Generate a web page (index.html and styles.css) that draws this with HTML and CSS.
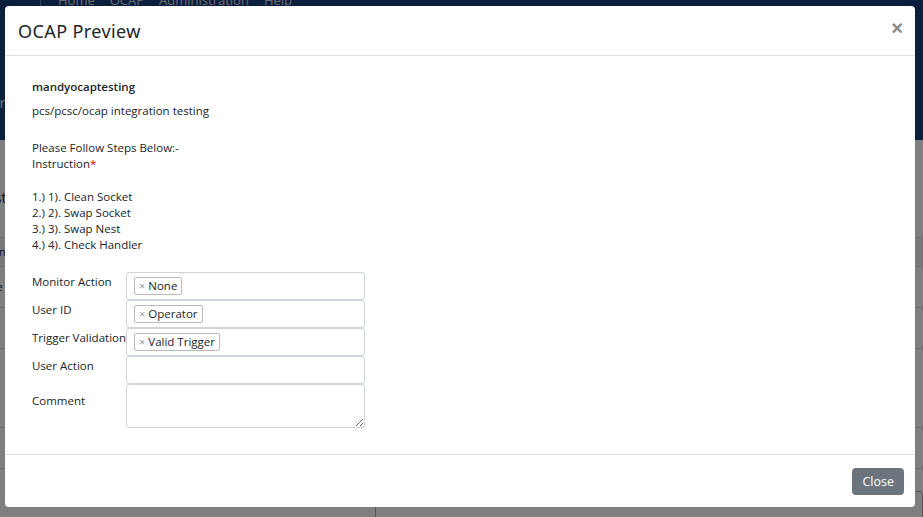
FILE: index.html
```html
<!DOCTYPE html>
<html lang="en">
<head>
    <meta charset="UTF-8">
    <meta name="viewport" content="width=device-width, initial-scale=1.0">
    <title>OCAP Preview</title>
    <link rel="stylesheet" href="styles.css">
</head>
<body>
    <div class="page">
        <header class="top-bar">
            <nav class="main-nav">
                <span class="nav-sep"></span>
                <a href="#">Home</a>
                <a href="#">OCAP</a>
                <a href="#">Administration</a>
                <a href="#">Help</a>
            </nav>
            <h2 class="page-title">Overview</h2>
        </header>
        <div class="page-content">
            <div class="toolbar">
                <span class="toolbar-label">List</span>
                <button class="btn-primary">Save</button>
            </div>
            <div class="table-head">Action</div>
            <div class="table-row">Title</div>
            <div class="table-row"></div>
            <div class="table-row tall"></div>
            <div class="table-row"></div>
            <div class="bottom-field"></div>
        </div>
    </div>

    <div class="backdrop"></div>

    <div class="modal">
        <div class="modal-header">
            <h5 class="modal-title">OCAP Preview</h5>
            <button class="modal-close">&times;</button>
        </div>
        <div class="modal-body">
            <p class="ocap-name">mandyocaptesting</p>
            <p class="ocap-desc">pcs/pcsc/ocap integration testing</p>

            <div class="instructions">
                <div>Please Follow Steps Below:-</div>
                <div>Instruction<span class="required">*</span></div>
                <div class="spacer"></div>
                <div>1.) 1). Clean Socket</div>
                <div>2.) 2). Swap Socket</div>
                <div>3.) 3). Swap Nest</div>
                <div>4.) 4). Check Handler</div>
            </div>

            <div class="preview-form">
                <label>Monitor Action</label>
                <div class="select-box"><span class="tag"><span class="tag-x">&times;</span>None</span></div>

                <label>User ID</label>
                <div class="select-box"><span class="tag"><span class="tag-x">&times;</span>Operator</span></div>

                <label>Trigger Validation</label>
                <div class="select-box"><span class="tag"><span class="tag-x">&times;</span>Valid Trigger</span></div>

                <label>User Action</label>
                <div class="select-box"></div>

                <label class="label-comment">Comment</label>
                <textarea class="comment-box"></textarea>
            </div>
        </div>
        <div class="modal-footer">
            <button class="btn-secondary">Close</button>
        </div>
    </div>
</body>
</html>
```

FILE: styles.css
```css
body {
    margin: 0;
    font-family: "Open Sans", "Noto Sans", Arial, sans-serif;
    font-size: 11.5px;
    color: #212529;
    background: #fff;
    overflow: hidden;
}

/* page behind the modal */
.top-bar {
    background: #163c78;
    height: 140px;
    overflow: hidden;
}
.main-nav {
    display: flex;
    align-items: center;
    gap: 15px;
    margin-top: -8px;
    padding-left: 40px;
    height: 16px;
}
.main-nav a {
    color: #d8dde6;
    text-decoration: none;
    font-size: 13px;
}
.nav-sep {
    width: 1px;
    height: 30px;
    background: #6b7fa3;
    margin-right: 2px;
}
.page-title {
    margin: 84px 0 0 -28px;
    font-size: 15px;
    font-weight: normal;
    color: #e8ebf0;
}
.toolbar {
    display: flex;
    justify-content: space-between;
    align-items: center;
    padding: 12px 0 0 0;
}
.toolbar-label {
    margin-left: -16px;
    margin-top: 36px;
    font-size: 14px;
}
.btn-primary {
    background: #007bff;
    color: #fff;
    border: none;
    font-size: 13px;
    height: 23px;
    padding: 0 4px 0 4px;
    margin-right: -40px;
    align-self: flex-start;
}
.table-head {
    margin-top: 30px;
    height: 28px;
    background: #f2f2f2;
    border-top: 1px solid #ddd;
    border-bottom: 1px solid #ddd;
    text-indent: -28px;
    line-height: 28px;
}
.table-row {
    height: 40px;
    border-bottom: 1px solid #ddd;
    text-indent: -20px;
    line-height: 40px;
}
.table-row.tall {
    height: 78px;
}
.bottom-field {
    margin: 22px 0 0 375px;
    height: 30px;
    border: 1px solid #aaa;
    border-radius: 4px;
}

.backdrop {
    position: fixed;
    inset: 0;
    background: rgba(0, 0, 0, 0.5);
}

/* modal */
.modal {
    position: fixed;
    top: 6px;
    left: 5px;
    width: 910px;
    height: 501px;
    background: #fff;
    border-radius: 4px;
    display: flex;
    flex-direction: column;
}
.modal-header {
    display: flex;
    align-items: center;
    justify-content: space-between;
    height: 49px;
    padding: 0 12px 0 13px;
    border-bottom: 1px solid #dee2e6;
}
.modal-title {
    margin: 0;
    font-family: "Noto Sans", "Open Sans", sans-serif;
    font-weight: 400;
    font-size: 18px;
    color: #212529;
    letter-spacing: 0.4px;
}
.modal-close {
    background: none;
    border: none;
    padding: 0;
    font-size: 20px;
    font-weight: bold;
    color: #8a8a8a;
    cursor: pointer;
    margin-top: -4px;
}
.modal-body {
    flex: 1;
    padding: 23px 27px 0;
    line-height: 16px;
}
.ocap-name {
    margin: 0 0 8px;
    font-weight: 600;
}
.ocap-desc {
    margin: 0 0 21px;
}
.instructions .spacer {
    height: 17px;
}
.required {
    color: #e00;
}
.preview-form {
    display: grid;
    grid-template-columns: 94px 239px;
    margin-top: 19px;
}
.preview-form label {
    padding-top: 2px;
    white-space: nowrap;
}
.preview-form .label-comment {
    padding-top: 9px;
}
.select-box {
    box-sizing: border-box;
    height: 28px;
    border: 1px solid #ced4da;
    border-radius: 3px;
    padding: 4px 7px;
}
.tag {
    display: inline-flex;
    align-items: center;
    gap: 3px;
    height: 16px;
    padding: 0 4px;
    border: 1px solid #bbb;
    border-radius: 2px;
    font-size: 11.5px;
    line-height: 14px;
}
.tag-x {
    color: #999;
    font-size: 11px;
}
.comment-box {
    box-sizing: border-box;
    height: 44px;
    border: 1px solid #ced4da;
    border-radius: 3px;
    resize: vertical;
}
.modal-footer {
    display: flex;
    justify-content: flex-end;
    align-items: center;
    height: 52px;
    padding-right: 11px;
    border-top: 1px solid #dee2e6;
}
.btn-secondary {
    background: #6c757d;
    color: #fff;
    border: none;
    border-radius: 4px;
    height: 27px;
    padding: 0 10px;
    font-family: "Open Sans", sans-serif;
    font-size: 12.5px;
}
```
